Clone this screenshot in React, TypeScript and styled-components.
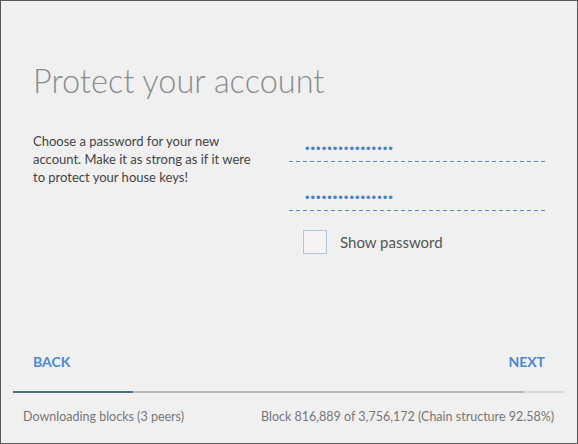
import styled, { createGlobalStyle } from "styled-components";

const GlobalStyle = createGlobalStyle`
    html, body {
        margin: 0;
        padding: 0;
        background-color: #f0f0f0;
    }
    * {
        box-sizing: border-box;
    }
`;

const Window = styled.div`
    display: flex;
    flex-direction: column;

    width: 578px;
    height: 444px;
    background-color: #f0f0f0;
    border: 1px solid #575757;

    font-family: Lato, "Liberation Sans", sans-serif;
`;

const Main = styled.div`
    flex: 1;
    padding: 58px 32px 0 32px;
`;

const Title = styled.h1`
    margin: 0 0 29px 0;
    font-size: 32.5px;
    line-height: 44px;
    font-weight: 300;
    color: #8c8c8c;
`;

const Columns = styled.div`
    display: grid;
    grid-template-columns: 1fr 256px;
    column-gap: 28px;
`;

const Description = styled.p`
    margin: 0;
    font-size: 13px;
    line-height: 18px;
    color: #444;
`;

const Fields = styled.div`
    display: flex;
    flex-direction: column;
    margin-top: -19px;
`;

const Field = styled.div`
    height: 49px;
    display: flex;
    align-items: flex-end;
    padding-bottom: 1px;
    background-image: linear-gradient(to right, #5b8ac6 4px, transparent 4px);
    background-size: 7px 1px;
    background-repeat: repeat-x;
    background-position: left bottom;
`;

const PasswordInput = styled.input`
    width: 100%;
    height: 25px;
    padding: 0 0 1px 16px;
    border: none;
    outline: none;
    background: transparent;
    color: #4f82c4;
    font-family: "Liberation Sans", sans-serif;
    font-size: 13px;
    letter-spacing: 1px;
`;

const CheckRow = styled.label`
    display: flex;
    align-items: center;
    gap: 13px;
    margin-top: 19px;
    padding-left: 14px;

    font-size: 15px;
    color: #555;
`;

const Box = styled.span`
    width: 24px;
    height: 24px;
    border: 1px solid #b3c5da;
    background-color: #f5f3f3;
`;

const Actions = styled.div`
    display: flex;
    justify-content: space-between;
    align-items: center;
    padding: 0 32px 21px 32px;
`;

const ActionButton = styled.button`
    padding: 0;
    border: none;
    background: none;
    font-family: Lato, "Liberation Sans", sans-serif;
    font-size: 14px;
    font-weight: bold;
    color: #4a88d3;
    cursor: pointer;
`;

const Progress = styled.div`
    margin: 0 12px;
    height: 2px;
    background: linear-gradient(to right, #b9b9b9 0 92.58%, #d9d9d9 92.58% 100%);
`;

const ProgressFill = styled.div`
    height: 100%;
    background-color: #4c6f87;
`;

const Status = styled.div`
    display: flex;
    justify-content: space-between;
    align-items: center;
    height: 50px;
    padding: 0 23px 4px 22px;

    font-size: 12.5px;
    font-variant-numeric: tabular-nums;
    color: #777;
`;

function App() {
    const downloaded = 816889;
    const total = 3756172;

    return <>
        <GlobalStyle/>
        <Window>
            <Main>
                <Title>Protect your account</Title>
                <Columns>
                    <Description>
                        Choose a password for your new account. Make it as strong as if it were to protect your house keys!
                    </Description>
                    <Fields>
                        <Field><PasswordInput type="password" defaultValue="passwordpassword"/></Field>
                        <Field><PasswordInput type="password" defaultValue="passwordpassword"/></Field>
                        <CheckRow><Box/>Show password</CheckRow>
                    </Fields>
                </Columns>
            </Main>
            <Actions>
                <ActionButton>BACK</ActionButton>
                <ActionButton>NEXT</ActionButton>
            </Actions>
            <Progress>
                <ProgressFill style={{width: `${(downloaded / total) * 100}%`}}/>
            </Progress>
            <Status>
                <span>Downloading blocks (3 peers)</span>
                <span>Block 816,889 of 3,756,172 (Chain structure 92.58%)</span>
            </Status>
        </Window>
    </>;
}

export default App;
